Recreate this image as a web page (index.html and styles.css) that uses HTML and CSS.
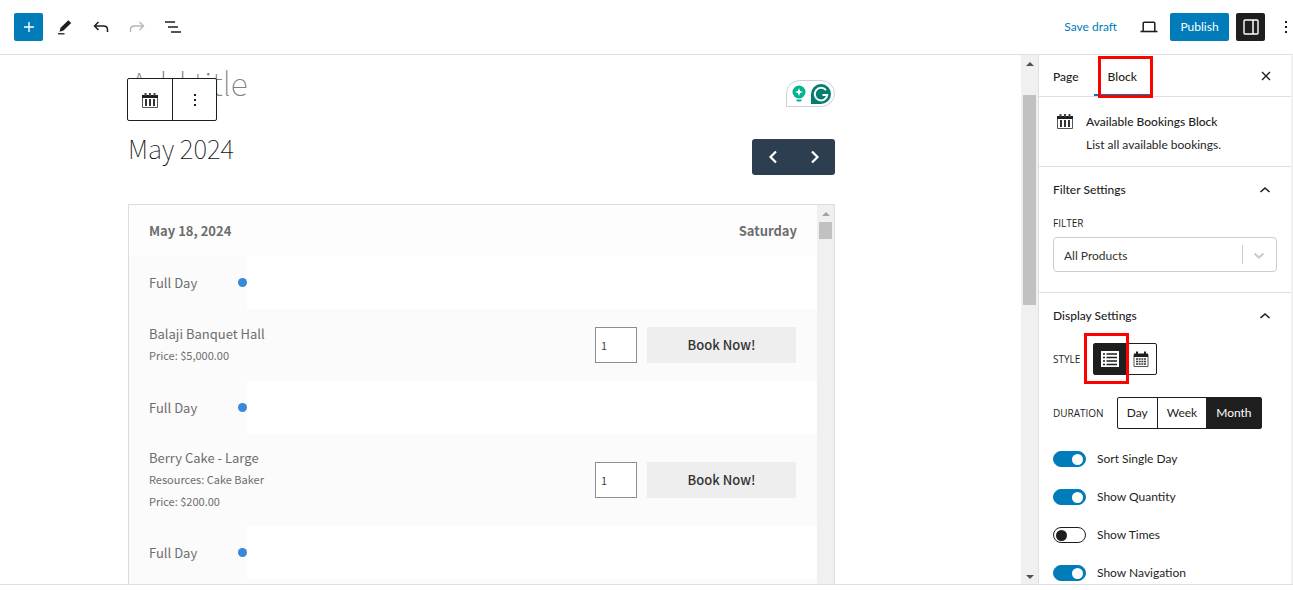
FILE: index.html
```html
<!DOCTYPE html>
<html lang="en">
<head>
  <meta charset="UTF-8" />
  <meta name="viewport" content="width=device-width, initial-scale=1.0" />
  <title>Add title - Editor</title>
  <link rel="stylesheet" href="styles.css">
</head>
<body>
  <svg class="sprite" aria-hidden="true">
    <symbol id="calendar" viewBox="0 0 16 16">
      <path d="M.5 4.500h15v11H.5z" fill="none" stroke="#555" />
      <path d="M0 3h16v3H0z" fill="#1e1e1e" />
      <path d="M3.500 1v3M8 1v3M12.500 1v3" stroke="#444" stroke-width="2" />
      <path d="M4 7v7M8 7v7M12 7v7" stroke="#333" stroke-width="2" />
    </symbol>
    <symbol id="dots" viewBox="0 0 4 14">
      <path d="M1 1h2v2H1zM1 6h2v2H1zM1 11h2v2H1z" fill="#1e1e1e" />
    </symbol>
    <symbol id="chevron-up" viewBox="0 0 12 8">
      <path d="M1.500 6 6 2l4.500 4" fill="none" stroke="#1e1e1e" stroke-width="1.600" />
    </symbol>
  </svg>

  <header class="topbar">
    <div class="topbar-group tools">
      <button class="btn-square primary" aria-label="Add block">
        <svg width="12" height="12" viewBox="0 0 12 12"><path d="M6 1v10M1 6h10" stroke="#fff" stroke-width="1.400" /></svg>
      </button>
      <button class="icon-btn" aria-label="Tools">
        <svg width="16" height="16" viewBox="0 0 16 16"><path d="M11.300 1.200 14.200 4 6.500 11.600l-4 1.200 1.100-4z" fill="#1e1e1e" /><path d="M1 14.800h6.500" stroke="#1e1e1e" stroke-width="1.300" /></svg>
      </button>
      <button class="icon-btn" aria-label="Undo">
        <svg width="16" height="14" viewBox="0 0 16 14"><path d="M5.500 2 1.500 6l4 4M1.800 6h8.700c2.700 0 4 1.300 4 3.500V12" fill="none" stroke="#1e1e1e" stroke-width="1.500" /></svg>
      </button>
      <button class="icon-btn" aria-label="Redo" disabled>
        <svg width="16" height="14" viewBox="0 0 16 14"><path d="m10.500 2 4 4-4 4M14.200 6H5.500c-2.700 0-4 1.300-4 3.500V12" fill="none" stroke="#b8b8b8" stroke-width="1.400" /></svg>
      </button>
      <button class="icon-btn" aria-label="Document overview">
        <svg width="18" height="14" viewBox="0 0 18 14"><path d="M1 2h10M4 7h10M7 12h10" stroke="#1e1e1e" stroke-width="1.600" /></svg>
      </button>
    </div>
    <div class="topbar-group">
      <a class="save-draft" href="#">Save draft</a>
      <button class="icon-btn device" aria-label="Preview">
        <svg width="18" height="12" viewBox="0 0 18 12"><path d="M3.200 10V2.200c0-.6.300-1 1-1h9.600c.7 0 1 .4 1 1V10" fill="none" stroke="#1e1e1e" stroke-width="1.500" /><path d="M.500 10.500h17" stroke="#1e1e1e" stroke-width="1.600" /></svg>
      </button>
      <button class="publish">Publish</button>
      <button class="btn-square dark" aria-label="Settings">
        <svg width="16" height="16" viewBox="0 0 16 16"><rect x="1" y="1" width="14" height="14" rx="1" fill="none" stroke="#fff" stroke-width="1.400" /><path d="M10 1v14" stroke="#fff" stroke-width="1.500" /></svg>
      </button>
      <button class="icon-btn more" aria-label="Options"><svg width="4" height="14"><use href="#dots" /></svg></button>
    </div>
  </header>

  <div class="workspace">
    <main class="canvas">
      <div class="title-row">
        <h1 class="post-title">Add title</h1>
        <div class="block-toolbar">
          <button aria-label="Available Bookings Block"><svg width="16" height="16"><use href="#calendar" /></svg></button>
          <button aria-label="Block options"><svg width="4" height="14"><use href="#dots" /></svg></button>
        </div>
        <div class="assistant">
          <svg width="14" height="18" viewBox="0 0 14 18"><circle cx="7" cy="7" r="6.500" fill="#06b391" /><path d="M4 10h6v3H4zM4 14.500h6l-1 2H5z" fill="#06b391" /><path d="m7 3 1.100 2.900L11 7 8.100 8.100 7 11 5.900 8.100 3 7l2.900-1.100z" fill="#fff" /></svg>
          <svg width="20" height="20" viewBox="0 0 20 20"><path d="M10 0a10 10 0 0 1 0 20H0V10A10 10 0 0 1 10 0z" fill="#027e6f" /><path d="M15 6.200A6.300 6.300 0 1 0 16.300 11H11.500M16.300 11l-2.800-.1" fill="none" stroke="#fff" stroke-width="1.900" /></svg>
        </div>
      </div>

      <div class="month-row">
        <h2>May 2024</h2>
        <div class="month-nav">
          <button aria-label="Previous month"><svg width="10" height="14" viewBox="0 0 10 14"><path d="M8 1.500 2.500 7 8 12.500" fill="none" stroke="#fff" stroke-width="2.200" /></svg></button>
          <button aria-label="Next month"><svg width="10" height="14" viewBox="0 0 10 14"><path d="M2 1.500 7.500 7 2 12.500" fill="none" stroke="#fff" stroke-width="2.200" /></svg></button>
        </div>
      </div>

      <div class="bookings">
        <table>
          <thead>
            <tr class="day">
              <th colspan="2"><div class="line"><span>May 18, 2024</span><span>Saturday</span></div></th>
            </tr>
          </thead>
          <tbody>
            <tr class="slot">
              <td class="time"><div class="line">Full Day <i class="dot"></i></div></td>
              <td></td>
            </tr>
            <tr class="product">
              <td colspan="2">
                <div class="line">
                  <div>
                    <p class="name">Balaji Banquet Hall</p>
                    <p class="meta">Price: $5,000.00</p>
                  </div>
                  <div class="book">
                    <input type="text" value="1" aria-label="Quantity, Balaji Banquet Hall">
                    <button>Book Now!</button>
                  </div>
                </div>
              </td>
            </tr>
            <tr class="slot">
              <td class="time"><div class="line">Full Day <i class="dot"></i></div></td>
              <td></td>
            </tr>
            <tr class="product">
              <td colspan="2">
                <div class="line">
                  <div>
                    <p class="name">Berry Cake - Large</p>
                    <p class="meta">Resources: Cake Baker</p>
                    <p class="meta">Price: $200.00</p>
                  </div>
                  <div class="book">
                    <input type="text" value="1" aria-label="Quantity, Berry Cake - Large">
                    <button>Book Now!</button>
                  </div>
                </div>
              </td>
            </tr>
            <tr class="slot">
              <td class="time"><div class="line">Full Day <i class="dot"></i></div></td>
              <td></td>
            </tr>
          </tbody>
        </table>
        <div class="scrollbar list-scroll" aria-hidden="true">
          <i class="arrow up"></i>
          <i class="thumb"></i>
        </div>
      </div>
    </main>

    <div class="scrollbar page-scroll" aria-hidden="true">
      <i class="arrow up"></i>
      <i class="thumb"></i>
      <i class="arrow down"></i>
    </div>

    <aside class="sidebar">
      <div class="tabs">
        <button>Page</button>
        <button class="active">Block<i class="mark"></i></button>
        <button class="close" aria-label="Close settings">
          <svg width="10" height="10" viewBox="0 0 10 10"><path d="m1 1 8 8M9 1 1 9" stroke="#1e1e1e" stroke-width="1.400" /></svg>
        </button>
      </div>

      <div class="block-card">
        <svg width="16" height="16"><use href="#calendar" /></svg>
        <div>
          <h2>Available Bookings Block</h2>
          <p>List all available bookings.</p>
        </div>
      </div>

      <section class="panel filter">
        <h2><button>Filter Settings <svg width="12" height="8"><use href="#chevron-up" /></svg></button></h2>
        <label class="caption" for="filter">Filter</label>
        <div class="select">
          <select id="filter">
            <option>All Products</option>
          </select>
          <svg width="12" height="8" viewBox="0 0 12 8"><path d="m1.500 1.500 4.500 4 4.500-4" fill="none" stroke="#ccc" stroke-width="2.200" /></svg>
        </div>
      </section>

      <section class="panel display">
        <h2><button>Display Settings <svg width="12" height="8"><use href="#chevron-up" /></svg></button></h2>
        <div class="option style">
          <span class="caption">Style</span>
          <div class="button-group">
            <button class="active" aria-label="List">
              <svg width="18" height="16" viewBox="0 0 18 16"><path d="M0 0h18v16H0z" fill="#fff" /><path d="M2 3h2M2 6.500h2M2 10h2M2 13.500h2M5.500 3H16M5.500 6.500H16M5.500 10H16M5.500 13.500H16" stroke="#1e1e1e" stroke-width="1.500" /></svg>
              <i class="mark"></i>
            </button>
            <button aria-label="Calendar">
              <svg width="16" height="16" viewBox="0 0 16 16"><path d="M1 3.500h14v12H1z" fill="none" stroke="#555" /><path d="M1 2.500h14V6H1z" fill="#1e1e1e" /><path d="M4 .5v3M12 .5v3" stroke="#1e1e1e" stroke-width="2" /><path d="M3 8h10M3 10.500h10M3 13h10" stroke="#333" stroke-width="1.500" stroke-dasharray="2 .67" /></svg>
            </button>
          </div>
        </div>
        <div class="option duration">
          <span class="caption">Duration</span>
          <div class="button-group">
            <button>Day</button>
            <button>Week</button>
            <button class="active">Month</button>
          </div>
        </div>
        <div class="toggles">
          <label><input type="checkbox" checked> Sort Single Day</label>
          <label><input type="checkbox" checked> Show Quantity</label>
          <label><input type="checkbox"> Show Times</label>
          <label><input type="checkbox" checked> Show Navigation</label>
        </div>
      </section>
    </aside>
  </div>
</body>
</html>
```

FILE: styles.css
```css
* {
  box-sizing: border-box;
}
body {
  margin: 0;
  height: 100vh;
  display: flex;
  flex-direction: column;
  padding-bottom: 5px;
  overflow: hidden;
  background: #fff;
  color: #1e1e1e;
  font-family: Lato, sans-serif;
  font-size: 12px;
  line-height: 20px;
}
h1, h2, p {
  margin: 0;
  font-size: inherit;
  font-weight: 400;
}
button, input, select {
  font: inherit;
  color: inherit;
}
button {
  display: flex;
  align-items: center;
  justify-content: center;
  padding: 0;
  border: none;
  background: none;
  cursor: pointer;
}
svg {
  flex: none;
  display: block;
}
.sprite {
  position: absolute;
  width: 0;
  height: 0;
}

/* top bar */
.topbar {
  flex: none;
  display: flex;
  justify-content: space-between;
  height: 55px;
  padding-left: 14px;
  border-bottom: 1px solid #e0e0e0;
}
.topbar-group {
  display: flex;
  align-items: center;
}
.tools {
  gap: 8px;
}
.icon-btn {
  width: 28px;
  height: 28px;
}
.btn-square {
  width: 29px;
  height: 28px;
  border-radius: 2px;
}
.primary {
  background: #007cba;
}
.dark {
  background: #1e1e1e;
}
.save-draft {
  margin-right: 18px;
  color: #007cba;
  text-decoration: none;
}
.device {
  margin-right: 7px;
}
.publish {
  width: 59px;
  height: 28px;
  margin-right: 7px;
  border-radius: 2px;
  background: #007cba;
  color: #fff;
}
.more {
  width: 14px;
  margin: 0 0 0 14px;
}

/* editor canvas */
.workspace {
  flex: 1;
  min-height: 0;
  display: flex;
  border-bottom: 1px solid #e0e0e0;
}
.canvas {
  flex: 1;
  display: flex;
  flex-direction: column;
  min-width: 0;
  padding: 8px 186px 0 128px;
  overflow: hidden;
  color: #6d6d6d;
  font-family: "Noto Sans CJK SC", sans-serif;
}
.title-row {
  position: relative;
  flex: none;
  display: flex;
  justify-content: space-between;
  height: 74px;
}
.post-title {
  padding-left: 2px;
  color: #808080;
  font-size: 32px;
  font-weight: 100;
  line-height: 38px;
}
.block-toolbar {
  position: absolute;
  top: 15px;
  left: -1px;
  display: flex;
  height: 43px;
  border: 1px solid #1e1e1e;
  border-radius: 2px;
  background: #fff;
}
.block-toolbar button {
  width: 44px;
}
.block-toolbar button + button {
  border-left: 1px solid #1e1e1e;
}
.assistant {
  display: flex;
  align-items: center;
  gap: 5px;
  width: 49px;
  height: 27px;
  margin-top: 17px;
  padding-left: 5px;
  border: 1px solid #cdd0dc;
  border-radius: 14px 14px 14px 0;
}
.month-row {
  flex: none;
  display: flex;
  justify-content: space-between;
  height: 67px;
  padding-top: 2px;
}
.month-row h2 {
  color: #111;
  font-size: 26px;
  font-weight: 100;
  line-height: 18px;
}
.month-nav {
  display: flex;
  height: 36px;
  border-radius: 3px;
  background: #2c3e50;
}
.month-nav button {
  width: 42px;
}
.month-nav button + button {
  width: 41px;
}

/* bookings list */
.bookings {
  flex: 1;
  min-height: 0;
  display: flex;
  border: 1px solid #ddd;
  border-bottom: none;
  background: #fbfbfb;
  overflow: hidden;
}
.bookings table {
  flex: 1;
  align-self: flex-start;
  border-collapse: collapse;
  table-layout: fixed;
  font-size: 13px;
}
.bookings th, .bookings td {
  padding: 0;
  text-align: left;
}
.line {
  display: flex;
  align-items: center;
  justify-content: space-between;
}
.day {
  height: 51px;
  background: #fdfdfd;
}
.day .line {
  padding: 0 20px;
}
.slot {
  height: 53px;
  background: #fff;
}
.slot .time {
  width: 118px;
  background: #fbfbfb;
}
.time .line {
  padding-left: 20px;
}
.dot {
  width: 9px;
  height: 9px;
  border-radius: 50%;
  background: #3788d8;
}
.product {
  height: 72px;
  background: #fbfbfb;
}
.product .line {
  padding: 14px 21px 14px 20px;
}
.name {
  line-height: 20px;
}
.meta {
  font-size: 11px;
  line-height: 22px;
}
.book {
  display: flex;
  gap: 10px;
}
.book input {
  width: 42px;
  height: 36px;
  padding: 0 5px;
  border: 1px solid #8d8f94;
  border-radius: 0;
  background: #fff;
  color: #43454b;
  font-size: 11px;
}
.book button {
  width: 149px;
  height: 36px;
  background: #eee;
  color: #333;
  font-weight: 500;
}

/* scrollbars */
.scrollbar {
  flex: none;
  display: flex;
  flex-direction: column;
  align-items: center;
  width: 17px;
  background: #f0f0f0;
}
.arrow {
  border: 4px solid transparent;
}
.up {
  margin-top: 3px;
  border-bottom-color: #505050;
}
.down {
  margin-top: auto;
  margin-bottom: 1px;
  border-top-color: #505050;
}
.thumb {
  width: 13px;
  background: #c1c1c1;
}
.page-scroll .thumb {
  height: 210px;
  margin-top: 29px;
}
.list-scroll .up {
  border-bottom-color: #a3a3a3;
}
.list-scroll .thumb {
  height: 17px;
  margin-top: 6px;
}

/* settings sidebar */
.sidebar {
  flex: none;
  width: 255px;
  border-left: 1px solid #e0e0e0;
  border-right: 2px solid #f0f0f0;
  overflow: hidden;
}
.tabs {
  display: flex;
  gap: 1px;
  height: 42px;
  border-bottom: 1px solid #e0e0e0;
}
.tabs button {
  padding: 2px 14px 0;
  font-weight: 500;
}
.tabs .active {
  position: relative;
  box-shadow: inset 0 -2px #007cba;
}
.tabs .close {
  width: 28px;
  margin-left: auto;
  margin-right: 11px;
  padding: 0;
}
.mark {
  position: absolute;
  border: 3px solid #f00;
}
.tabs .mark {
  inset: 1px -2px -2px 4px;
}
.block-card {
  display: flex;
  gap: 13px;
  height: 70px;
  padding: 14px 18px;
  border-bottom: 1px solid #e0e0e0;
}
.block-card svg {
  margin-top: 2px;
}
.block-card h2 {
  font-weight: 500;
  line-height: 22px;
}
.block-card p {
  line-height: 24px;
}
.panel {
  padding: 13px 14px 20px;
  border-bottom: 1px solid #e0e0e0;
}
.panel h2 button {
  width: 100%;
  padding-right: 6px;
  justify-content: space-between;
  font-weight: 500;
}
.caption {
  font-family: "Open Sans", sans-serif;
  font-size: 10px;
  line-height: 16px;
  text-transform: uppercase;
}
.filter .caption {
  display: block;
  margin-top: 15px;
}
.select {
  position: relative;
  display: flex;
  margin-top: 6px;
}
.select select {
  width: 100%;
  height: 35px;
  padding: 2px 10px 0;
  border: 1px solid #ccc;
  border-radius: 4px;
  background: #fff;
  color: #333;
  appearance: none;
}
.select svg {
  position: absolute;
  top: 15px;
  right: 12px;
}
.select::after {
  content: "";
  position: absolute;
  top: 8px;
  right: 34px;
  width: 1px;
  height: 19px;
  background: #ccc;
}
.option {
  display: flex;
  align-items: center;
  gap: 13px;
}
.style {
  margin-top: 17px;
}
.duration {
  margin-top: 22px;
}
.button-group {
  display: flex;
  border: 1px solid #1e1e1e;
  border-radius: 2px;
}
.button-group button {
  position: relative;
  height: 30px;
  padding: 0 9px;
}
.button-group button + button {
  border-left: 1px solid #1e1e1e;
}
.button-group .active {
  background: #1e1e1e;
  color: #fff;
}
.style button {
  width: 31px;
  padding: 0;
}
.style .mark {
  inset: -11px -4px -10px -10px;
}
.style .active {
  z-index: 1;
}
.toggles {
  display: flex;
  flex-direction: column;
  gap: 18px;
  margin-top: 20px;
}
.toggles label {
  display: flex;
  align-items: center;
  gap: 11px;
}
.toggles input {
  display: flex;
  align-items: center;
  width: 33px;
  height: 16px;
  margin: 0;
  padding: 0 2px;
  border: 1px solid #1e1e1e;
  border-radius: 8px;
  background: #fff;
  appearance: none;
}
.toggles input::before {
  content: "";
  width: 11px;
  height: 11px;
  border-radius: 50%;
  background: #1e1e1e;
}
.toggles input:checked {
  justify-content: flex-end;
  border-color: #007cba;
  background: #007cba;
}
.toggles input:checked::before {
  background: #fff;
}
```
